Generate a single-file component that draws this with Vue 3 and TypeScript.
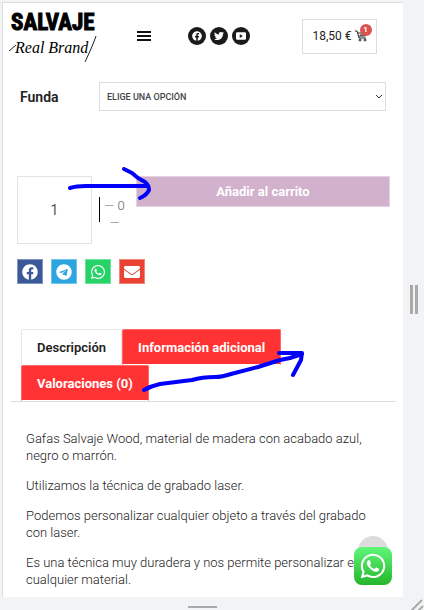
<script setup lang="ts">
import { ref } from 'vue'

interface Tab { id: string; label: string }

const tabs: Tab[] = [
  { id: 'desc', label: 'Descripción' },
  { id: 'info', label: 'Información adicional' },
  { id: 'reviews', label: 'Valoraciones (0)' },
]
const active = ref('desc')
const quantity = ref('1')
const option = ref('')
const paragraphs: string[] = [
  'Gafas Salvaje Wood, material de madera con acabado azul, negro o marrón.',
  'Utilizamos la técnica de grabado laser.',
  'Podemos personalizar cualquier objeto a través del grabado con laser.',
  'Es una técnica muy duradera y nos permite personalizar en cualquier material.',
]

const facebook = 'M504 256C504 119 393 8 256 8S8 119 8 256c0 123.780 90.690 226.380 209.250 245V327.690h-63V256h63v-54.640c0-62.150 37-96.480 93.670-96.480 27.140 0 55.520 4.840 55.520 4.840v61h-31.280c-30.800 0-40.410 19.120-40.410 38.730V256h68.780l-11 71.690h-57.780V501C413.310 482.380 504 379.780 504 256z'
const twitter = 'M459 152c.3 4.500.3 9.100.3 13.600 0 138.700-105.600 298.600-298.600 298.600-59.500 0-114.700-17.200-161.100-47.100 8.400 1 16.600 1.300 25.300 1.300 49 0 94.200-16.600 130.300-44.800-46.100-1-84.800-31.200-98.100-72.800 6.500 1 13 1.600 19.800 1.600 9.400 0 18.800-1.300 27.600-3.600-48.100-9.700-84.100-52-84.100-103v-1.300c14 7.800 30.200 12.700 47.400 13.300-28.300-18.800-46.800-51-46.800-87.400 0-19.500 5.200-37.400 14.300-53 51.700 63.700 129.300 105.300 216.400 109.800-1.600-7.800-2.600-15.900-2.600-24 0-57.800 46.800-104.900 104.900-104.900 30.200 0 57.500 12.700 76.700 33.100 23.700-4.500 46.500-13.300 66.600-25.300-7.800 24.400-24.400 44.800-46.100 57.800 21.100-2.300 41.600-8.100 60.400-16.200-14.300 20.800-32.200 39.300-52.600 54.300z'
const telegram = 'M248 8C111 8 0 119 0 256s111 248 248 248 248-111 248-248S385 8 248 8zm121.800 169.900-40.700 191.800c-3 13.600-11.100 16.900-22.400 10.500l-62-45.700-29.900 28.800c-3.300 3.300-6.100 6.100-12.500 6.100l4.400-63.100 114.900-103.800c5-4.400-1.100-6.900-7.700-2.500l-142 89.400-61.200-19.100c-13.300-4.200-13.600-13.300 2.800-19.700l239.100-92.200c11.100-4 20.800 2.700 17.200 19.500z'
const whatsapp = 'M380.900 97.100C339 55.100 283.200 32 223.900 32c-122.400 0-222 99.600-222 222 0 39.100 10.200 77.300 29.600 111L0 480l117.700-30.900c32.400 17.700 68.900 27 106.100 27h.1c122.300 0 224.100-99.600 224.100-222 0-59.300-25.200-115-67.100-157zm-157 341.600c-33.200 0-65.700-8.900-94-25.700l-6.700-4-69.800 18.300L72 359.200l-4.400-7c-18.500-29.400-28.200-63.300-28.200-98.200 0-101.700 82.800-184.500 184.600-184.500 49.300 0 95.600 19.200 130.400 54.100 34.800 34.900 56.200 81.200 56.100 130.500 0 101.800-84.900 184.600-186.600 184.600zm101.200-138.200c-5.500-2.800-32.800-16.200-37.900-18-5.100-1.900-8.800-2.800-12.500 2.800-3.700 5.600-14.300 18-17.600 21.800-3.200 3.700-6.500 4.200-12 1.400-32.600-16.300-54-29.100-75.500-66-5.700-9.800 5.700-9.100 16.300-30.300 1.800-3.700.9-6.900-.5-9.700-1.400-2.800-12.500-30.100-17.100-41.200-4.500-10.800-9.100-9.300-12.500-9.500-3.200-.2-6.900-.2-10.600-.2-3.700 0-9.700 1.400-14.800 6.900-5.100 5.600-19.400 19-19.400 46.300 0 27.300 19.900 53.700 22.600 57.400 2.800 3.700 39.100 59.700 94.800 83.800 35.200 15.200 49 16.500 66.600 13.900 10.700-1.600 32.800-13.400 37.400-26.400 4.600-13 4.600-24.100 3.200-26.400-1.300-2.500-5-3.900-10.500-6.600z'
const mail = 'M502.300 190.800c3.900-3.100 9.700-.2 9.700 4.700V400c0 26.500-21.500 48-48 48H48c-26.500 0-48-21.500-48-48V195.600c0-5 5.700-7.800 9.700-4.700 22.400 17.400 52.100 39.500 154.100 113.600 21.100 15.400 56.700 47.800 92.200 47.600 35.700.3 72-32.800 92.300-47.600 102-74.100 131.600-96.300 154-113.700zM256 320c23.200.4 56.600-29.200 73.400-41.400 132.700-96.300 142.800-104.700 173.400-128.700 5.800-4.500 9.200-11.500 9.200-18.900v-19c0-26.500-21.500-48-48-48H48c-26.500 0-48 21.500-48 48v19c0 7.400 3.400 14.300 9.200 18.900 30.600 23.900 40.700 32.400 173.400 128.700 16.800 12.200 50.200 41.800 73.400 41.400z'

const shares = [
  { name: 'facebook', box: '0 0 512 512', path: facebook },
  { name: 'telegram', box: '0 0 496 512', path: telegram },
  { name: 'whatsapp', box: '0 0 448 512', path: whatsapp },
  { name: 'email', box: '0 0 512 512', path: mail },
]
</script>

<template>
  <div class="stage">
    <div class="screen">
      <header class="header">
        <a class="logo" href="#">
          <span class="brand">SALVAJE</span>
          <span class="tagline">Real Brand</span>
          <svg class="swash" viewBox="0 0 90 54" aria-hidden="true">
            <path d="M0 43L7 37M87 28Q84 37 76 54" />
          </svg>
        </a>
        <button class="menu" type="button" aria-label="Menú"><i></i><i></i><i></i></button>
        <nav class="social">
          <a href="#" aria-label="Facebook"><svg viewBox="0 0 512 512"><path :d="facebook" /></svg></a>
          <a href="#" aria-label="Twitter"><svg viewBox="0 0 512 512"><path :d="twitter" /></svg></a>
          <a href="#" aria-label="YouTube">
            <svg viewBox="0 0 16 16"><path fill-rule="evenodd" d="M2 2h12q2 0 2 2v8q0 2-2 2H2q-2 0-2-2V4q0-2 2-2zM6 5v6l5-3z" /></svg>
          </a>
        </nav>
        <a class="cart" href="#">
          <span>18,50 €</span>
          <span class="basket">
            <svg viewBox="0 0 12 12" aria-hidden="true">
              <path d="M0 1h2l2 7h7M3 3h8l-1 3H4M5 5h5" />
              <circle cx="5" cy="10" r="1" /><circle cx="10" cy="10" r="1" />
            </svg>
            <b class="badge">1</b>
          </span>
        </a>
      </header>

      <main>
        <div class="variation">
          <label for="funda">Funda</label>
          <div class="picker">
            <select id="funda" v-model="option">
              <option value="">ELIGE UNA OPCIÓN</option>
            </select>
            <svg viewBox="0 0 8 6" aria-hidden="true"><path d="M1 1l3 3 3-3" /></svg>
          </div>
        </div>

        <form class="purchase" @submit.prevent>
          <input v-model="quantity" class="quantity" type="text" inputmode="numeric" aria-label="Cantidad" />
          <div class="stock"><span>— 0</span><span>—</span></div>
          <button class="add" type="submit">Añadir al carrito</button>
        </form>

        <div class="shares">
          <a v-for="s in shares" :key="s.name" href="#" :class="['share', s.name]" :aria-label="s.name">
            <svg :viewBox="s.box"><path :d="s.path" /></svg>
          </a>
        </div>

        <section class="details">
          <div class="tabs" role="tablist">
            <button
              v-for="t in tabs" :key="t.id" type="button" role="tab"
              :aria-selected="active === t.id" :class="['tab', { active: active === t.id }]"
              @click="active = t.id"
            >{{ t.label }}</button>
          </div>
          <div class="panel" role="tabpanel">
            <p v-for="(p, i) in paragraphs" :key="i">{{ p }}</p>
          </div>
        </section>
      </main>

      <span class="totop"></span>
      <a class="chat" href="#" aria-label="WhatsApp"><svg viewBox="0 0 448 512"><path :d="whatsapp" /></svg></a>
    </div>
    <div class="side"><i></i><i></i></div>
    <div class="bottom"><i></i></div>
    <svg class="corner" viewBox="0 0 13 13" aria-hidden="true"><path d="M0 14L11 3M7 14l5-5" /></svg>

    <svg class="ink" viewBox="0 0 424 610" aria-hidden="true">
      <path d="M70 188Q76 186 86 186L147 186M124 169L132 173L138 178L145 182Q149 185 149 190Q147 195 140 198" />
      <path d="M144 390Q151 386 160 384L192 380Q202 377 215 377Q222 377 231 374L258 367L280 360L290 358L302 354M279 353L302 353L301 360L293 375" />
    </svg>
  </div>
</template>

<style>
body { background: #f1f3f4; }
</style>

<style scoped>
* { box-sizing: border-box; }
.stage {
  position: relative;
  display: grid;
  grid-template-columns: 1fr 21px;
  grid-template-rows: auto 13px;
  padding: 2px 0 0 2px;
  color: #222;
  font-family: Roboto, "Liberation Sans", sans-serif;
}
.screen {
  position: relative;
  background: #fff;
  border-left: 1px solid #dcdcdc;
  border-top: 1px solid #dcdcdc;
}
a { color: inherit; text-decoration: none; }
button { border: 0; font-family: inherit; cursor: pointer; }
.header {
  display: grid;
  grid-template-columns: 90px 1fr auto auto;
  align-items: center;
  padding: 5px 26px 5px 6px;
}
.logo { position: relative; display: flex; flex-direction: column; height: 56px; color: #000; }
.brand {
  padding-left: 2px;
  font: bold 23px/30px "Liberation Sans Narrow", "Roboto Condensed", "Liberation Sans", sans-serif;
  -webkit-text-stroke: 1px #000;
}
.tagline { padding-left: 6px; font: italic 16px/20px "Liberation Serif", serif; }
.swash { position: absolute; left: 0; top: 0; width: 90px; height: 54px; }
.swash path { fill: none; stroke: #222; }
.menu {
  display: flex;
  flex-direction: column;
  gap: 2px;
  justify-self: center;
  padding: 0;
  background: none;
}
.menu i { width: 14px; height: 2px; background: #111; }
.social { display: flex; gap: 4px; margin-right: 52px; }
.social a {
  display: grid;
  place-items: center;
  width: 18px;
  height: 18px;
  border-radius: 50%;
  background: #1a1a1a;
}
.social svg { width: 10px; height: 10px; fill: #fff; }
.cart {
  display: flex;
  align-items: center;
  justify-content: center;
  gap: 3px;
  width: 75px;
  height: 35px;
  border: 1px solid #ddd;
  font-size: 12px;
}
.basket { position: relative; display: flex; }
.basket svg { width: 12px; height: 12px; fill: none; stroke: #222; }
.badge {
  position: absolute;
  right: -5px;
  top: -6px;
  width: 12px;
  height: 12px;
  border-radius: 50%;
  background: #d9534f;
  color: #fff;
  font-size: 8px;
  line-height: 12px;
  text-align: center;
}
.variation {
  display: grid;
  grid-template-columns: 79px 1fr;
  align-items: center;
  padding: 13px 17px 0;
}
.variation label { font-size: 14px; font-weight: 600; }
.picker { position: relative; }
.picker select {
  display: block;
  width: 100%;
  height: 29px;
  padding: 0 7px;
  appearance: none;
  border: 1px solid #ddd;
  border-radius: 0;
  background: #fff;
  color: #444;
  font: 500 9px Roboto, sans-serif;
}
.picker svg {
  position: absolute;
  right: 3px;
  top: 12px;
  width: 8px;
  height: 6px;
  fill: none;
  stroke: #333;
  pointer-events: none;
}
.purchase {
  display: grid;
  grid-template-columns: 75px 36px 1fr;
  gap: 7px 4px;
  align-items: start;
  padding: 65px 13px 0 14px;
}
.quantity {
  width: 75px;
  height: 68px;
  border: 1px solid #e3e3e3;
  color: #555;
  font: 14px Roboto, sans-serif;
  text-align: center;
}
.stock {
  display: flex;
  flex-direction: column;
  align-items: center;
  height: 25px;
  margin: 21px 3px 0;
  border-left: 1px solid #000;
  color: #666;
  font-weight: 300;
  line-height: 17px;
  white-space: nowrap;
}
.stock span { font-size: 13px; }
.add {
  height: 31px;
  border: 1px solid #e5d3e2;
  background: #d1b1cc;
  color: #fff;
  font-size: 13px;
  font-weight: 700;
}
.shares { display: flex; gap: 8px; padding: 15px 14px 0; }
.share {
  display: grid;
  place-items: center;
  width: 26px;
  height: 25px;
  border: 1px solid rgb(255 255 255 / 35%);
}
.share svg { width: 16px; height: 16px; fill: #fff; }
.facebook { background: #3b5998; }
.telegram { background: #2ca5e0; }
.whatsapp { background: #25d366; }
.email { background: #ea4335; }
.details { padding: 45px 7px 0 8px; }
.tabs {
  display: flex;
  flex-wrap: wrap;
  padding: 0 10px;
  border-bottom: 1px solid #ddd;
}
.tab {
  height: 36px;
  padding: 0 15px;
  border: 1px solid #f66;
  border-bottom-color: #fff;
  border-radius: 2px 2px 0 0;
  background: #f33;
  color: #fff;
  font-size: 13px;
  font-weight: 700;
}
.tab.active { border-color: #e6e6e6 #e6e6e6 #fff; background: #fff; color: #222; font-weight: 600; }
.panel { padding: 28px 15px 9px; color: #222; font-size: 13px; font-weight: 300; line-height: 17px; }
.panel p { margin: 0 0 13px; }
.panel p:last-child { margin: 0; }
.totop {
  position: absolute;
  right: 15px;
  bottom: 31px;
  width: 30px;
  height: 30px;
  border-radius: 50%;
  background: #dcdcdc;
}
.chat {
  position: absolute;
  right: 11px;
  bottom: 12px;
  display: grid;
  place-items: center;
  width: 38px;
  height: 38px;
  border-radius: 8px;
  background: linear-gradient(#5ff77a, #25b52b);
}
.chat svg { width: 28px; height: 28px; fill: #fff; }
.side { display: flex; align-items: center; justify-content: center; gap: 2px; }
.side i { width: 3px; height: 29px; background: #aaa; }
.bottom { display: flex; align-items: center; justify-content: center; padding-top: 6px; }
.bottom i { width: 29px; height: 2px; background: #aaa; }
.corner { justify-self: end; width: 13px; height: 13px; fill: none; stroke: #aaa; stroke-width: 2; }
.ink {
  position: absolute;
  left: 0;
  top: 0;
  width: 424px;
  height: 610px;
  fill: none;
  stroke: #0000fb;
  stroke-width: 4;
  stroke-linecap: round;
  stroke-linejoin: round;
  pointer-events: none;
}
</style>
